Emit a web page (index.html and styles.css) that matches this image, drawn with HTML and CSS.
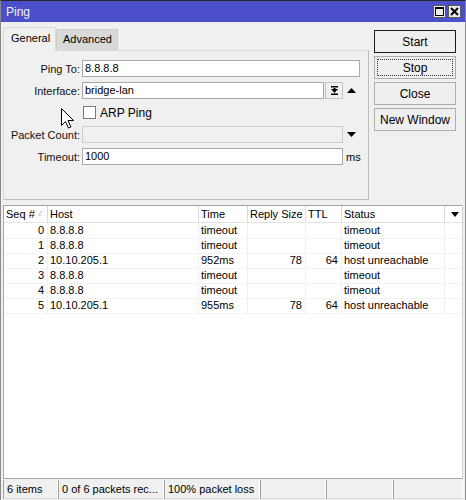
FILE: index.html
```html
<!DOCTYPE html>
<html>
<head>
<meta charset="utf-8">
<link rel="stylesheet" href="styles.css">
</head>
<body>
<div class="window">
  <div class="titlebar">
    <span class="title">Ping</span>
    <span class="tb-btn"><svg width="9" height="9" viewBox="0 0 9 9"><rect x="0.5" y="0.5" width="8" height="8" fill="none" stroke="#000"/><line x1="0" y1="1.5" x2="9" y2="1.5" stroke="#000"/></svg></span>
    <span class="tb-btn"><svg width="9" height="9" viewBox="0 0 9 9"><path d="M1 1L8 8M8 1L1 8" stroke="#000" stroke-width="2"/></svg></span>
  </div>
  <div class="main">
    <div class="top">
      <div class="left">
        <div class="tabs">
          <div class="tab active">General</div>
          <div class="tab">Advanced</div>
        </div>
        <div class="panel">
          <div class="row">
            <span class="label">Ping To:</span>
            <span class="input wide">8.8.8.8</span>
          </div>
          <div class="row">
            <span class="label">Interface:</span>
            <span class="input">bridge-lan</span>
            <span class="ddbtn"><svg width="9" height="9" viewBox="0 0 9 9"><rect x="1" y="0" width="7" height="1.5" fill="#000"/><path d="M1 3H8L4.5 7Z" fill="#000"/><rect x="3.5" y="2" width="2" height="2" fill="#000"/><rect x="1" y="7.5" width="7" height="1.5" fill="#000"/></svg></span>
            <span class="trail"><svg width="9" height="5" viewBox="0 0 9 5"><path d="M0 5L4.5 0L9 5Z" fill="#000"/></svg></span>
          </div>
          <div class="row">
            <span class="label"></span>
            <span class="check"></span>
            <span class="checklabel">ARP Ping</span>
          </div>
          <div class="row">
            <span class="label">Packet Count:</span>
            <span class="input disabled"></span>
            <span class="trail"><svg width="9" height="5" viewBox="0 0 9 5"><path d="M0 0L4.5 5L9 0Z" fill="#000"/></svg></span>
          </div>
          <div class="row">
            <span class="label">Timeout:</span>
            <span class="input">1000</span>
            <span class="trail unit">ms</span>
          </div>
        </div>
      </div>
      <div class="buttons">
        <div class="btn default">Start</div>
        <div class="btn focus"><span class="focusring">Stop</span></div>
        <div class="btn">Close</div>
        <div class="btn">New Window</div>
      </div>
    </div>
    <div class="table">
      <div class="grid head">
        <div class="c r">Seq #<svg class="sort" width="5" height="6" viewBox="0 0 5 6"><path d="M0.5 5.5L4 0.5" stroke="#b8b8b8" fill="none"/><path d="M0.5 5.5H4" stroke="#d8d8d8"/></svg></div>
        <div class="c">Host</div>
        <div class="c">Time</div>
        <div class="c">Reply Size</div>
        <div class="c">TTL</div>
        <div class="c">Status</div>
        <div class="c menu"><svg width="8" height="5" viewBox="0 0 8 5"><path d="M0 0H8L4 5Z" fill="#000"/></svg></div>
      </div>
      <div class="grid rowd">
        <div class="c num">0</div><div class="c">8.8.8.8</div><div class="c">timeout</div><div class="c num"></div><div class="c num"></div><div class="c">timeout</div><div class="c e"></div>
      </div>
      <div class="grid rowd">
        <div class="c num">1</div><div class="c">8.8.8.8</div><div class="c">timeout</div><div class="c num"></div><div class="c num"></div><div class="c">timeout</div><div class="c e"></div>
      </div>
      <div class="grid rowd">
        <div class="c num">2</div><div class="c">10.10.205.1</div><div class="c">952ms</div><div class="c num">78</div><div class="c num">64</div><div class="c">host unreachable</div><div class="c e"></div>
      </div>
      <div class="grid rowd">
        <div class="c num">3</div><div class="c">8.8.8.8</div><div class="c">timeout</div><div class="c num"></div><div class="c num"></div><div class="c">timeout</div><div class="c e"></div>
      </div>
      <div class="grid rowd">
        <div class="c num">4</div><div class="c">8.8.8.8</div><div class="c">timeout</div><div class="c num"></div><div class="c num"></div><div class="c">timeout</div><div class="c e"></div>
      </div>
      <div class="grid rowd">
        <div class="c num">5</div><div class="c">10.10.205.1</div><div class="c">955ms</div><div class="c num">78</div><div class="c num">64</div><div class="c">host unreachable</div><div class="c e"></div>
      </div>
    </div>
    <div class="statusbar">
      <div class="seg s1">6 items</div>
      <div class="seg s2">0 of 6 packets rec...</div>
      <div class="seg s3">100% packet loss</div>
      <div class="seg s4"></div>
      <div class="seg s5"></div>
      <div class="seg s6"></div>
    </div>
  </div>
  <svg class="cursor" width="13" height="21" viewBox="0 0 13 21"><path d="M0.5 0.5V17.5L4.5 13.5L7.5 20L10 19L7 12.5H12.5Z" fill="#fff" stroke="#000" stroke-width="1" stroke-linejoin="round"/></svg>
</div>
</body>
</html>
```

FILE: styles.css
```css
* { box-sizing: border-box; }
html, body { margin: 0; padding: 0; }
body {
  width: 466px;
  height: 500px;
  overflow: hidden;
  background: #f0f0f0;
  font-family: "Liberation Sans", Arial, sans-serif;
  font-size: 11px;
  color: #000;
}
.window {
  position: relative;
  height: 500px;
  display: flex;
  flex-direction: column;
  border-top: 1px solid #262626;
  border-left: 1px solid #8a8a8a;
  border-right: 1px solid #8a8a8a;
}
.titlebar {
  height: 21px;
  background: #4b4fc9;
  display: flex;
  align-items: center;
  padding: 0 4px 0 5px;
  color: #f2f2f2;
  font-size: 12px;
}
.title { flex: 1; }
.tb-btn {
  width: 13px;
  height: 13px;
  margin-left: 2px;
  background: #ececec;
  border: 1px solid #5a5a5a;
  display: flex;
  align-items: center;
  justify-content: center;
}
.main {
  flex: 1;
  display: flex;
  flex-direction: column;
  padding: 4px 2px 1px 2px;
}
.top { display: flex; }
.left { width: 366px; }
.tabs { display: flex; align-items: flex-end; height: 24px; }
.tab {
  height: 21px;
  width: 62px;
  padding-left: 6px;
  line-height: 19px;
  background: #d9d9d9;
  border: 1px solid #cdcdcd;
  border-bottom: none;
}
.tab.active {
  height: 24px;
  width: 53px;
  padding-left: 7px;
  line-height: 20px;
  background: #f0f0f0;
  border-color: #d9d9d9;
  position: relative;
  z-index: 1;
  margin-bottom: -1px;
}
.panel {
  height: 150px;
  border: 1px solid #bdbdbd;
  border-top-color: #d9d9d9;
  border-left-color: #d9d9d9;
  padding: 9px 8px 0 0;
  display: flex;
  flex-direction: column;
  gap: 5px;
}
.row { display: flex; align-items: center; height: 17px; }
.label { width: 76px; text-align: right; margin-right: 2px; color: #111; }
.input {
  flex: 1;
  height: 17px;
  background: #fff;
  border: 1px solid #a9a9a9;
  padding: 0 2px;
  line-height: 15px;
}
.input.disabled { background: #f0f0f0; border-color: #cccccc; }
.ddbtn {
  width: 18px;
  height: 17px;
  margin-left: 1px;
  border: 1px solid #c4c4c4;
  background: #f0f0f0;
  display: flex;
  align-items: center;
  justify-content: center;
}
.trail {
  width: 17px;
  display: flex;
  justify-content: center;
  align-items: center;
}
.unit { justify-content: flex-start; padding-left: 3px; }
.check {
  width: 13px;
  height: 13px;
  margin-left: 1px;
  border: 1px solid #7a7a7a;
  background: #fff;
}
.checklabel { margin-left: 4px; font-size: 12px; }
.buttons {
  margin-left: 5px;
  width: 82px;
  padding-top: 4px;
  display: flex;
  flex-direction: column;
  gap: 3px;
}
.btn {
  height: 23px;
  border: 1px solid #adadad;
  background: #efefef;
  display: flex;
  align-items: center;
  justify-content: center;
  font-size: 12px;
}
.btn.default { border-color: #1a1a1a; }
.btn.focus { padding: 2px; }
.focusring {
  width: 100%;
  height: 100%;
  border: 1px dotted #333;
  display: flex;
  align-items: center;
  justify-content: center;
}
.table {
  margin-top: 5px;
  flex: 1;
  background: #fff;
  border: 1px solid #a5a5a5;
  border-right-color: #d0d0d0;
}
.grid {
  display: grid;
  grid-template-columns: 44px 151px 49px 58px 36px 103px 1fr;
}
.head { height: 17px; border-bottom: 1px solid #e3e3e3; }
.head .c { line-height: 16px; border-right: 1px solid #d9d9d9; padding-left: 2px; position: relative; }
.head .menu { border-right: none; display: flex; align-items: center; justify-content: center; }
.sort { position: absolute; left: 34px; top: 4px; }
.rowd { height: 15px; }
.rowd .c {
  line-height: 15px;
  padding-left: 2px;
  border-right: 1px solid #f0f0f0;
  border-bottom: 1px solid #f3f3f3;
  white-space: nowrap;
}
.rowd .c.num { text-align: right; padding: 0 3px 0 0; }
.rowd .c.e { border-right: none; }
.statusbar {
  height: 19px;
  margin-top: 1px;
  display: flex;
}
.seg {
  height: 19px;
  line-height: 18px;
  padding-left: 3px;
  border-left: 1px solid #a0a0a0;
  border-right: 1px solid #ffffff;
  border-bottom: 1px solid #dcdcdc;
  white-space: nowrap;
  overflow: hidden;
}
.s1 { width: 55px; }
.s2 { width: 106px; }
.s3 { width: 96px; }
.s4 { width: 66px; }
.s5 { width: 67px; }
.s6 { flex: 1; }
.cursor { position: absolute; left: 60px; top: 107px; }
```
